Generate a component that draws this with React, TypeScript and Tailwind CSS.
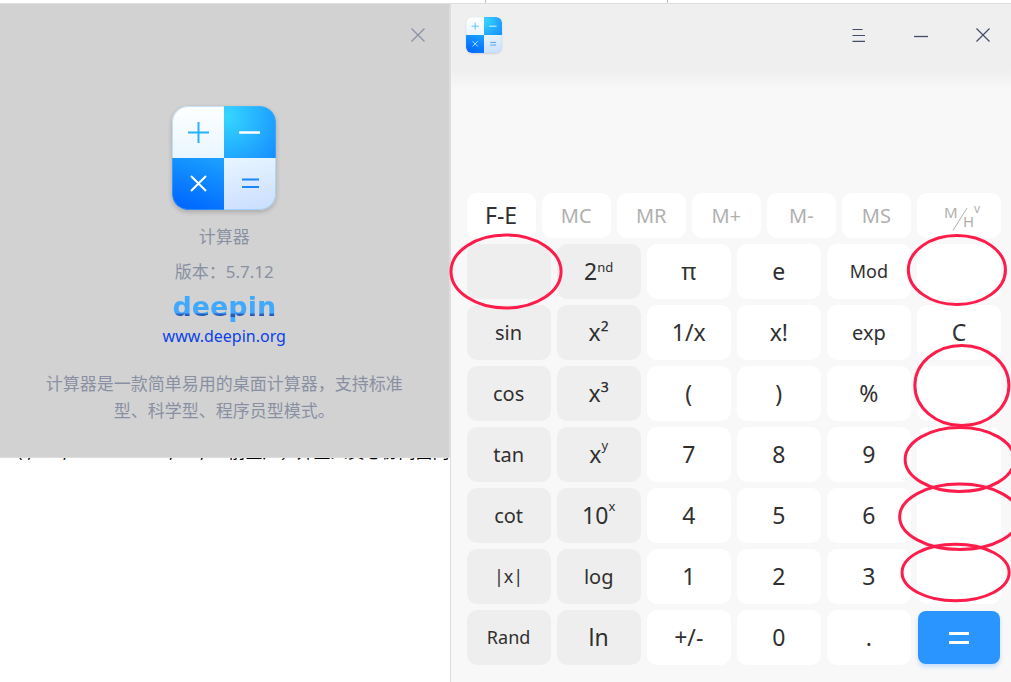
import type { ReactNode } from "react";

type Key = {
  id: string;
  label?: ReactNode;
  size?: "sm" | "md" | "lg";
};

const memoryKeys = ["MC", "MR", "M+", "M-", "MS"];

const power = (base: string, exp: string) => (
  <span>
    {base}
    <sup className="static align-[13px] text-[13px] leading-none">{exp}</sup>
  </span>
);

const keys: Key[] = [
  { id: "deg" },
  {
    id: "2nd",
    label: (
      <span>
        2<sup className="static align-[8px] text-[13px] leading-none">nd</sup>
      </span>
    ),
  },
  { id: "pi", label: "π" },
  { id: "e", label: "e" },
  { id: "mod", label: "Mod", size: "sm" },
  { id: "backspace" },

  { id: "sin", label: "sin", size: "md" },
  { id: "square", label: "x²" },
  { id: "reciprocal", label: "1/x" },
  { id: "factorial", label: "x!" },
  { id: "exp", label: "exp", size: "md" },
  { id: "clear", label: "C" },

  { id: "cos", label: "cos", size: "md" },
  { id: "cube", label: "x³" },
  { id: "open", label: "(" },
  { id: "close", label: ")" },
  { id: "percent", label: "%" },
  { id: "divide" },

  { id: "tan", label: "tan", size: "md" },
  { id: "power", label: power("x", "y") },
  { id: "7", label: "7" },
  { id: "8", label: "8" },
  { id: "9", label: "9" },
  { id: "multiply" },

  { id: "cot", label: "cot", size: "md" },
  { id: "pow10", label: power("10", "x") },
  { id: "4", label: "4" },
  { id: "5", label: "5" },
  { id: "6", label: "6" },
  { id: "subtract" },

  { id: "abs", label: "|x|", size: "sm" },
  { id: "log", label: "log", size: "md" },
  { id: "1", label: "1" },
  { id: "2", label: "2" },
  { id: "3", label: "3" },
  { id: "add" },

  { id: "rand", label: "Rand", size: "sm" },
  { id: "ln", label: "ln" },
  { id: "sign", label: "+/-" },
  { id: "0", label: "0" },
  { id: "dot", label: "." },
];

const sizes = {
  sm: "text-[18px]",
  md: "text-[20px]",
  lg: "text-[23px]",
};

// Marks around the keys, in keypad coordinates
const marks = [
  { cx: 39, cy: 27.5, rx: 55, ry: 36.5 },
  { cx: 489.5, cy: 26, rx: 48.5, ry: 34.5 },
  { cx: 494.5, cy: 141.5, rx: 47, ry: 40 },
  { cx: 492.3, cy: 215.5, rx: 54.5, ry: 32 },
  { cx: 492.3, cy: 272.7, rx: 60, ry: 32.7 },
  { cx: 488.2, cy: 328.5, rx: 53.5, ry: 28.3 },
];

function CalculatorIcon({ id, className }: { id: string; className: string }) {
  return (
    <svg viewBox="0 0 104 104" className={className} aria-hidden="true">
      <defs>
        <clipPath id={`${id}-clip`}>
          <rect width="104" height="104" rx="16" />
        </clipPath>
        <linearGradient id={`${id}-tl`} x1="0" y1="0" x2="0" y2="1">
          <stop stopColor="#ffffff" />
          <stop offset="1" stopColor="#e9f5ff" />
        </linearGradient>
        <radialGradient id={`${id}-tr`} cx="0.05" cy="0.2" r="1.25">
          <stop stopColor="#35d7ff" />
          <stop offset="1" stopColor="#158cff" />
        </radialGradient>
        <linearGradient id={`${id}-bl`} x1="0.75" y1="0" x2="0.4" y2="1">
          <stop stopColor="#1a9eff" />
          <stop offset="1" stopColor="#0068ff" />
        </linearGradient>
        <linearGradient id={`${id}-br`} x1="0.4" y1="0" x2="0.6" y2="1">
          <stop stopColor="#e6f4ff" />
          <stop offset="1" stopColor="#cbdfff" />
        </linearGradient>
      </defs>
      <g clipPath={`url(#${id}-clip)`}>
        <rect width="52" height="52" fill={`url(#${id}-tl)`} />
        <rect x="52" width="52" height="52" fill={`url(#${id}-tr)`} />
        <rect y="52" width="52" height="52" fill={`url(#${id}-bl)`} />
        <rect x="52" y="52" width="52" height="52" fill={`url(#${id}-br)`} />
      </g>
      <rect x="0.5" y="0.5" width="103" height="103" rx="15.5" fill="none" stroke="#6db8f5" strokeOpacity="0.4" />
      <g fill="none" strokeWidth="2">
        <path d="M16 26.5h21M26.5 16v21" stroke="#23b4fa" />
        <path d="M67 26.5h21" stroke="#fff" strokeWidth="2.4" />
        <path d="M19 70l15 15M34 70L19 85" stroke="#fff" />
        <path d="M70 73.500h17M70 81h17" stroke="#1a86fb" />
      </g>
    </svg>
  );
}

function CloseIcon() {
  return (
    <svg viewBox="0 0 14 14" className="size-3.5" fill="none" stroke="currentColor" strokeWidth="1.2">
      <path d="M0.500 0.500l13 13M13.500 0.500l-13 13" />
    </svg>
  );
}

function AboutDialog() {
  return (
    <section className="flex flex-col border-r border-b border-[#dddddd] bg-[#d2d2d2] text-[17px] leading-[27px] text-[#8a90a3]">
      <header className="flex h-[62px] items-center justify-end pr-6">
        <button type="button" aria-label="关闭">
          <CloseIcon />
        </button>
      </header>
      <div className="flex flex-col items-center px-8 pt-10 pb-[33px] text-center">
        <CalculatorIcon id="about" className="size-[104px] rounded-2xl shadow-[0_2px_5px_rgba(0,0,0,0.2)]" />
        <h1 className="mt-[13px]">计算器</h1>
        <p className="mt-2">版本：5.7.12</p>
        <div className="mt-[6px] bg-[linear-gradient(180deg,#40a9ff_68%,#2458b6_74%,#2458b6_80%,#40a9ff_82%)] bg-clip-text font-['DejaVu_Sans',sans-serif] text-[27px] leading-8 font-bold text-transparent">
          deepin
        </div>
        <a href="https://www.deepin.org" className="text-[16px] text-[#0b42e8]">
          www.deepin.org
        </a>
        <p className="mt-5">
          计算器是一款简单易用的桌面计算器，支持标准
          <br />
          型、科学型、程序员型模式。
        </p>
      </div>
    </section>
  );
}

function TitleBar() {
  return (
    <header className="flex h-[86px] items-start justify-between bg-linear-to-b from-[#efefef] from-75% to-[#f8f8f8] pt-3 pr-[21px] pl-[15px] text-[#414d68]">
      <CalculatorIcon id="bar" className="mt-px size-9 rounded-md shadow-[0_1px_2px_rgba(0,0,0,0.12)]" />
      <div className="flex h-[38px] items-center gap-12">
        <button type="button" aria-label="菜单">
          <svg viewBox="0 0 14 14" className="size-3.5" fill="none" stroke="currentColor" strokeWidth="1.2">
            <path d="M0.500 1.500h10M0.500 7.500h12.500M0.500 13.400h12.500" />
          </svg>
        </button>
        <button type="button" aria-label="最小化">
          <svg viewBox="0 0 14 14" className="size-3.5" fill="none" stroke="currentColor" strokeWidth="1.3">
            <path d="M0 8.500h14" />
          </svg>
        </button>
        <button type="button" aria-label="关闭">
          <CloseIcon />
        </button>
      </div>
    </header>
  );
}

function MemoryRow() {
  return (
    <div className="grid h-[45px] grid-cols-[repeat(6,69fr)_84fr] gap-1.5 text-[20px] text-[#b0b0b0]">
      <button type="button" className="rounded-[10px] bg-white text-[23px] text-[#303030]">
        F-E
      </button>
      {memoryKeys.map((label) => (
        <button key={label} type="button" disabled className="rounded-[10px] bg-white">
          {label}
        </button>
      ))}
      <button type="button" disabled className="flex items-center justify-center rounded-[10px] bg-white">
        <svg viewBox="0 0 46 40" className="h-10 w-[46px] overflow-visible" fill="currentColor">
          <text x="8" y="22" fontSize="15">M</text>
          <path d="M17 34.500L31 12" stroke="currentColor" />
          <text x="27" y="31" fontSize="15">H</text>
          <text x="38" y="17" fontSize="12">v</text>
        </svg>
      </button>
    </div>
  );
}

function Keypad() {
  return (
    <div className="relative mt-1.5">
      <div className="grid auto-rows-[55px] grid-cols-6 gap-1.5 text-[#303030]">
        {keys.map(({ id, label, size = "lg" }, i) => (
          <button
            key={id}
            type="button"
            aria-label={label ? undefined : id}
            className={`rounded-[10px] ${i % 6 < 2 ? "bg-[#eeeeee]" : "bg-white"} ${sizes[size]}`}
          >
            {label}
          </button>
        ))}
        <button
          type="button"
          aria-label="="
          className="m-px flex items-center justify-center rounded-lg bg-[#2b95ff] shadow-[0_3px_4px_rgba(43,149,255,0.25)]"
        >
          <svg viewBox="0 0 20 12" className="h-3 w-5" fill="#fff">
            <path d="M0 0h20v3H0zM0 9h20v3H0z" />
          </svg>
        </button>
      </div>
      <svg
        viewBox="0 0 534 421"
        preserveAspectRatio="none"
        className="pointer-events-none absolute inset-0 size-full overflow-visible"
        fill="none"
        stroke="#fe1c4b"
        strokeWidth="3"
        aria-hidden="true"
      >
        {marks.map((m) => (
          <ellipse key={m.cy} {...m} vectorEffect="non-scaling-stroke" />
        ))}
      </svg>
    </div>
  );
}

export default function App() {
  return (
    <div className="min-h-screen overflow-hidden bg-white font-['Noto_Sans','Noto_Sans_CJK_SC',sans-serif]">
      <div className="flex h-[3px] pl-[485px]">
        <div className="w-[183px] border-x border-[#c0c0c0]" />
      </div>
      <div className="flex min-h-[679px] border-t border-[#dddddd]">
        <div className="min-w-0 flex-[450]">
          <AboutDialog />
          {/* Last line of the page behind the dialog, only its foot shows */}
          <div className="flex h-0.5 items-end justify-between overflow-hidden text-[17px] leading-4 whitespace-pre text-black">
            <span>{".   ( ,       ,                       ,      ,"}</span>
            <span>前业户，并业人员心协同面向</span>
          </div>
        </div>
        <main className="min-w-0 flex-[561] border-l border-[#dddddd] bg-[#f8f8f8]">
          <TitleBar />
          <div className="pt-[103px] pr-2.5 pb-4 pl-4">
            <MemoryRow />
            <Keypad />
          </div>
        </main>
      </div>
    </div>
  );
}
